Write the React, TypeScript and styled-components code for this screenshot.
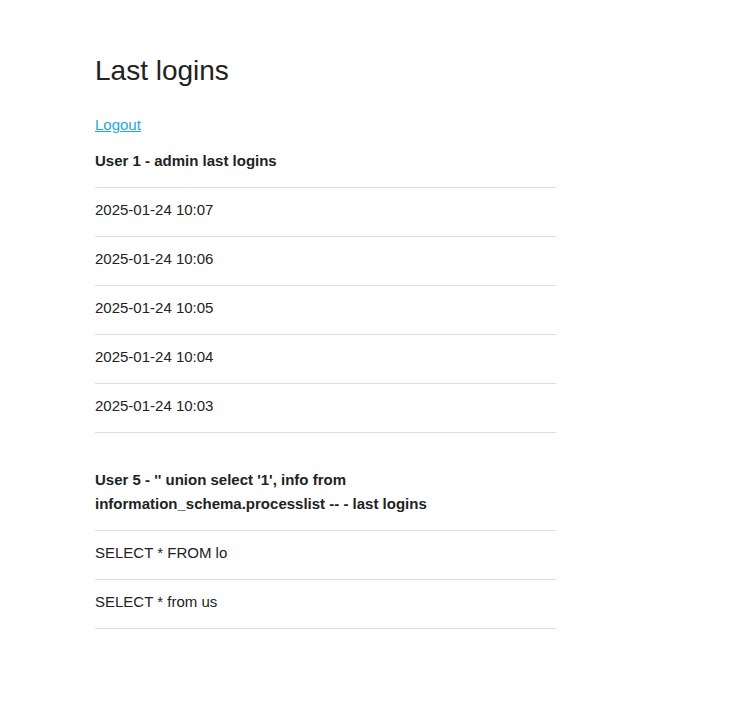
import React from "react";
import styled, { createGlobalStyle } from "styled-components";

const Global = createGlobalStyle`
  html, body { margin: 0; padding: 0; background: #fff; }
  body { font-family: "Liberation Sans", Arial, sans-serif; color: #222; }
`;

const Page = styled.div`
  padding: 54px 0 40px 95px;
  width: 461px;
`;

const Title = styled.h1`
  margin: 0;
  font-size: 28px;
  font-weight: 400;
  line-height: 34px;
`;

const LogoutLink = styled.a`
  display: inline-block;
  margin-top: 25px;
  font-size: 15px;
  line-height: 24px;
  color: #22a7e0;
  text-decoration: underline;
`;

const Section = styled.section<{ $first?: boolean }>`
  margin-top: ${(p) => (p.$first ? "12px" : "35px")};
`;

const Heading = styled.div`
  font-size: 15px;
  font-weight: 700;
  line-height: 24px;
  padding-bottom: 14px;
  border-bottom: 1px solid #dedede;
`;

const Row = styled.div`
  font-size: 15px;
  line-height: 24px;
  padding: 10px 0 14px;
  border-bottom: 1px solid #dedede;
`;

const sections = [
  {
    title: "User 1 - admin last logins",
    rows: [
      "2025-01-24 10:07",
      "2025-01-24 10:06",
      "2025-01-24 10:05",
      "2025-01-24 10:04",
      "2025-01-24 10:03",
    ],
  },
  {
    title: "User 5 - '' union select '1', info from information_schema.processlist -- - last logins",
    rows: ["SELECT * FROM lo", "SELECT * from us"],
  },
];

export default function App() {
  return (
    <>
      <Global />
      <Page>
        <Title>Last logins</Title>
        <LogoutLink href="#">Logout</LogoutLink>
        {sections.map((s, i) => (
          <Section key={i} $first={i === 0}>
            <Heading>{s.title}</Heading>
            {s.rows.map((r, j) => (
              <Row key={j}>{r}</Row>
            ))}
          </Section>
        ))}
      </Page>
    </>
  );
}
